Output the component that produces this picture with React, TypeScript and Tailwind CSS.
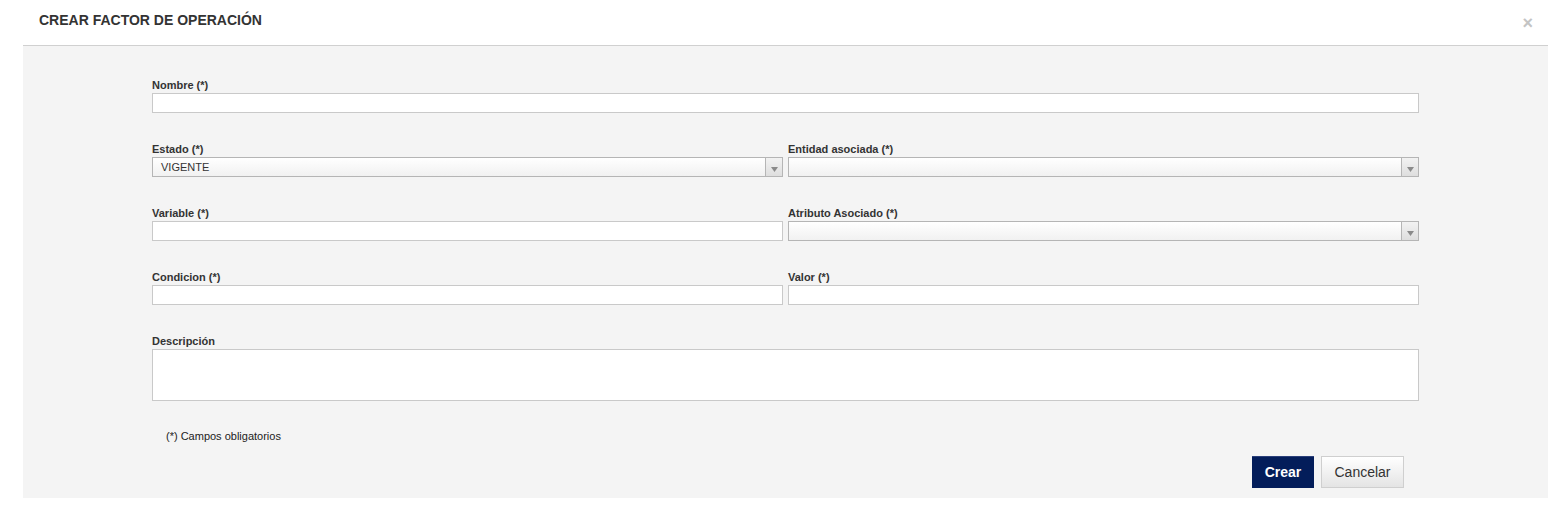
import React from "react";

const font = { fontFamily: '"Liberation Sans", Arial, sans-serif' };

function Label({ children }: { children: React.ReactNode }) {
  return (
    <label className="block h-[14px] text-[11px] leading-[12px] font-bold text-[#333]">
      {children}
    </label>
  );
}

function Input() {
  return <div className="h-[20px] border border-[#c9c9c9] bg-white" />;
}

function Select({ value }: { value?: string }) {
  return (
    <div className="flex h-[20px] border border-[#b5b5b5] bg-gradient-to-b from-white to-[#f1f1f1]">
      <div className="flex-1 pl-[8px] text-[11px] leading-[18px] text-[#333]">{value}</div>
      <div className="flex w-[17px] items-center justify-center border-l border-[#b5b5b5] bg-gradient-to-b from-[#f2f2f2] to-[#dedede]">
        <svg width="7" height="5" viewBox="0 0 7 5" className="mt-[5px]">
          <path d="M0 0 L7 0 L3.5 5 Z" fill="#8a8a8a" />
        </svg>
      </div>
    </div>
  );
}

export default function App() {
  return (
    <div className="w-[1568px] h-[517px] bg-white" style={font}>
      <div className="ml-[23px] mr-[20px] flex h-[46px] items-start justify-between border-b border-[#d0d0d0]">
        <h1 className="pl-[16px] pt-[12px] text-[14px] font-bold leading-[17px] text-[#333]">
          CREAR FACTOR DE OPERACIÓN
        </h1>
        <span className="pr-[15px] pt-[13px] text-[18px] font-bold leading-[20px] text-[#c4c4c4]">
          ×
        </span>
      </div>
      <div className="ml-[23px] mr-[20px] h-[452px] bg-[#f4f4f4] px-[129px] pt-[33px]">
        <div className="grid grid-cols-2 gap-x-[5px]">
          <div className="col-span-2 h-[64px]">
            <Label>Nombre (*)</Label>
            <Input />
          </div>
          <div className="h-[64px]">
            <Label>Estado (*)</Label>
            <Select value="VIGENTE" />
          </div>
          <div className="h-[64px]">
            <Label>Entidad asociada (*)</Label>
            <Select />
          </div>
          <div className="h-[64px]">
            <Label>Variable (*)</Label>
            <Input />
          </div>
          <div className="h-[64px]">
            <Label>Atributo Asociado (*)</Label>
            <Select />
          </div>
          <div className="h-[64px]">
            <Label>Condicion (*)</Label>
            <Input />
          </div>
          <div className="h-[64px]">
            <Label>Valor (*)</Label>
            <Input />
          </div>
          <div className="col-span-2">
            <Label>Descripción</Label>
            <div className="h-[52px] border border-[#c9c9c9] bg-white" />
          </div>
        </div>
        <p className="mt-[28px] pl-[14px] text-[11px] leading-[14px] text-[#222]">
          (*) Campos obligatorios
        </p>
        <div className="mt-[13px] flex justify-end gap-[7px] pr-[15px]">
          <button className="h-[32px] w-[62px] border-t border-[#2a3f7a] bg-[#031d5a] text-[14px] font-bold text-white">
            Crear
          </button>
          <button className="h-[32px] w-[83px] border border-[#cfcfcf] bg-gradient-to-b from-white to-[#e4e4e4] text-[14px] text-[#333]">
            Cancelar
          </button>
        </div>
      </div>
    </div>
  );
}
